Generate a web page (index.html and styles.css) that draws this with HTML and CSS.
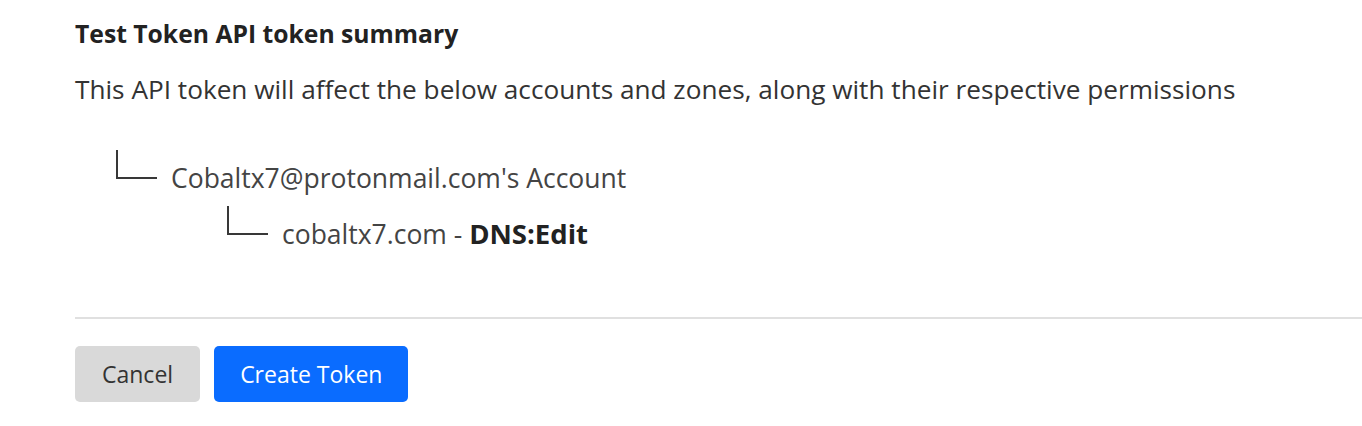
FILE: index.html
```html
<!DOCTYPE html>
<html>
<head>
<meta charset="utf-8">
<link rel="stylesheet" href="styles.css">
</head>
<body>
<div class="page">
  <h2 class="title">Test Token API token summary</h2>
  <p class="desc">This API token will affect the below accounts and zones, along with their respective permissions</p>
  <div class="tree">
    <div class="node level1">
      <span class="elbow"></span>
      <span class="label">Cobaltx7@protonmail.com's Account</span>
    </div>
    <div class="node level2">
      <span class="elbow"></span>
      <span class="label">cobaltx7.com - <strong>DNS:Edit</strong></span>
    </div>
  </div>
  <hr class="divider">
  <div class="actions">
    <button class="btn btn-cancel">Cancel</button>
    <button class="btn btn-primary">Create Token</button>
  </div>
</div>
</body>
</html>
```

FILE: styles.css
```css
html, body {
  margin: 0;
  padding: 0;
  background: #fff;
}
body {
  font-family: "Open Sans", "Noto Sans", sans-serif;
  color: #333;
}
.page {
  padding: 18px 0 0 75px;
}
.title {
  margin: 0;
  font-size: 24.7px;
  font-weight: 700;
  color: #222;
  line-height: 32px;
}
.desc {
  margin: 22px 0 0 0;
  font-size: 26.2px;
  line-height: 34px;
  color: #333;
}
.tree {
  margin-top: 35px;
}
.node {
  display: flex;
  align-items: flex-end;
  height: 56px;
}
.level1 { padding-left: 41px; }
.level2 { padding-left: 152px; }
.elbow {
  width: 41px;
  height: 29px;
  border-left: 2px solid #383838;
  border-bottom: 2px solid #383838;
  margin-bottom: 18px;
  margin-right: 14px;
  box-sizing: border-box;
}
.label {
  font-size: 26.5px;
  line-height: 34px;
  color: #444;
  margin-bottom: 2px;
}
.label strong {
  color: #222;
  font-size: 27.5px;
}
.divider {
  margin: 64px 0 0 0;
  border: 0;
  border-top: 2px solid #e0e0e0;
  height: 0;
}
.actions {
  display: flex;
  gap: 14px;
  margin-top: 27px;
}
.btn {
  font-family: inherit;
  font-size: 23px;
  height: 56px;
  border: 0;
  border-radius: 5px;
  padding: 0 27px;
}
.btn-cancel {
  background: #d9d9d9;
  color: #333;
}
.btn-primary {
  background: #0a6cff;
  color: #fff;
  padding: 0 26px;
}
```
